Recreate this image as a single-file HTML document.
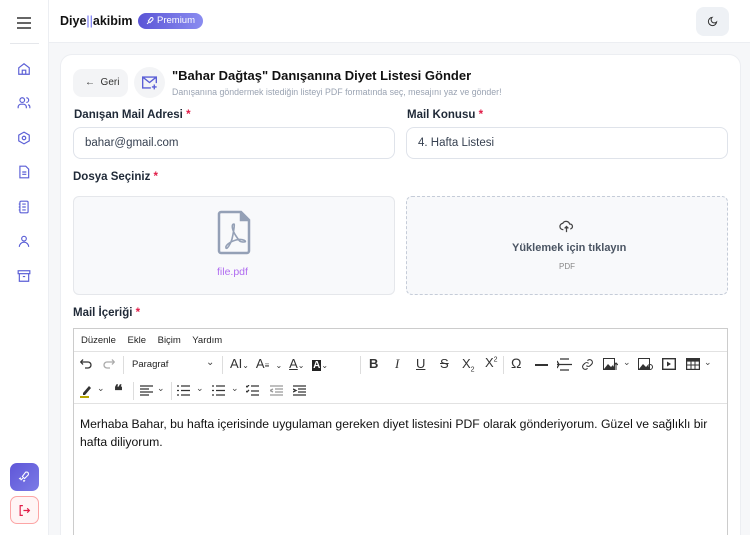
<!DOCTYPE html>
<html><head><meta charset="utf-8"><style>
*{box-sizing:border-box;margin:0;padding:0}
html,body{width:750px;height:535px;overflow:hidden}
body{background:#f6f7f9;font-family:"Liberation Sans",sans-serif;position:relative;color:#1f2937}
.side{position:absolute;left:0;top:0;width:49px;height:535px;background:#fff;border-right:1px solid #eceef2}
.hdr{position:absolute;left:49px;top:0;right:0;height:43px;background:#fff;border-bottom:1px solid #eceef2}
.ic{position:absolute;left:17px}
.card{position:absolute;left:60px;top:54px;width:681px;height:481px;background:#fff;border:1px solid #eceef2;border-bottom:none;border-radius:12px 12px 0 0}
.abs{position:absolute}
.lbl{position:absolute;font-size:11.5px;font-weight:bold;color:#1f2937}
.lbl b{color:#e11d48}
.inp{position:absolute;height:32px;border:1px solid #dfe3ea;border-radius:8px;font-size:11.5px;color:#374151;padding:9px 0 0 11px;background:#fff}
.tb{position:absolute;font-size:13px;color:#333}
</style></head><body>
<div class="side">
 <svg class="abs" style="left:17px;top:17px" width="14" height="12" viewBox="0 0 14 12"><path d="M0 1h14M0 6h14M0 11h14" stroke="#333" stroke-width="1.6"/></svg>
 <div class="abs" style="left:10px;top:43px;width:29px;height:1px;background:#e5e7eb"></div>
 <svg class="ic" style="top:62px" width="14" height="14" viewBox="0 0 24 24" fill="none" stroke="#5b5fd6" stroke-width="2"><path d="M3 10l9-7 9 7v11H3z M9 21v-7h6v7"/></svg>
 <svg class="ic" style="top:96px" width="14" height="14" viewBox="0 0 24 24" fill="none" stroke="#5b5fd6" stroke-width="2"><circle cx="9" cy="7" r="4"/><path d="M2 21v-2a5 5 0 015-5h4a5 5 0 015 5v2M16 3a4 4 0 010 8M22 21v-2a4 4 0 00-3-4"/></svg>
 <svg class="ic" style="top:131px" width="14" height="14" viewBox="0 0 24 24" fill="none" stroke="#5b5fd6" stroke-width="2"><path d="M12 2l9 5v10l-9 5-9-5V7z"/><circle cx="12" cy="12" r="3"/></svg>
 <svg class="ic" style="top:165px" width="14" height="14" viewBox="0 0 24 24" fill="none" stroke="#5b5fd6" stroke-width="2"><path d="M5 2h10l5 5v15H5z M9 12h7M9 16h7"/></svg>
 <svg class="ic" style="top:200px" width="14" height="14" viewBox="0 0 24 24" fill="none" stroke="#5b5fd6" stroke-width="2"><rect x="5" y="2" width="14" height="20" rx="2"/><path d="M9 7h6M9 12h6M9 17h6M3 7h3M3 12h3M3 17h3"/></svg>
 <svg class="ic" style="top:234px" width="14" height="14" viewBox="0 0 24 24" fill="none" stroke="#5b5fd6" stroke-width="2"><circle cx="12" cy="8" r="4"/><path d="M4 22a8 8 0 0116 0"/></svg>
 <svg class="ic" style="top:269px" width="14" height="14" viewBox="0 0 24 24" fill="none" stroke="#5b5fd6" stroke-width="2"><rect x="2" y="3" width="20" height="5"/><path d="M4 8v13h16V8M10 13h4"/></svg>
 <div class="abs" style="left:10px;top:463px;width:29px;height:28px;border-radius:7px;background:linear-gradient(135deg,#5f56d8,#7b7be6)"><svg class="abs" style="left:8px;top:7px" width="13" height="13" viewBox="0 0 24 24" fill="none" stroke="#fff" stroke-width="2"><path d="M5 19l4-4M14 4c4-1 6 1 5 5l-7 7-4-4zM5 14l-2 2 3 1M10 19l1 2 2-2"/></svg></div>
 <div class="abs" style="left:10px;top:496px;width:29px;height:28px;border-radius:7px;border:1px solid #fca5a5;background:#fff5f5"><svg class="abs" style="left:7px;top:7px" width="13" height="13" viewBox="0 0 24 24" fill="none" stroke="#e11d48" stroke-width="2.2"><path d="M9 3H4v18h5M10 12h11M17 8l4 4-4 4"/></svg></div>
</div>
<div class="hdr">
 <div class="abs" style="left:11px;top:14px;font-size:12.5px;font-weight:bold;color:#111">Diye<span style="color:#6366f1;font-weight:normal">||</span>akibim</div>
 <div class="abs" style="left:89px;top:13px;width:65px;height:16px;border-radius:8px;background:linear-gradient(90deg,#5b55d6,#8a8cf0);color:#fff;font-size:9.5px;padding:2px 0 0 19px">Premium</div>
 <svg class="abs" style="left:96px;top:16px" width="10" height="10" viewBox="0 0 24 24" fill="none" stroke="#fff" stroke-width="2.5"><path d="M5 19l4-4M14 4c4-1 6 1 5 5l-7 7-4-4z"/></svg>
 <div class="abs" style="left:647px;top:7px;width:33px;height:29px;border-radius:8px;background:#eef1f5"><svg class="abs" style="left:11px;top:9px" width="11" height="11" viewBox="0 0 24 24" fill="none" stroke="#333" stroke-width="2.2"><path d="M21 13A9 9 0 1111 3a7 7 0 0010 10z"/></svg></div>
</div>
<div class="card"></div>
<div class="abs" style="left:73px;top:69px;width:55px;height:28px;border-radius:9px;background:#f3f4f6;font-size:10px;color:#333;padding:8px 0 0 12px">←&nbsp;&nbsp;Geri</div>
<div class="abs" style="left:134px;top:67px;width:31px;height:31px;border-radius:50%;background:#f3f4f6"><svg class="abs" style="left:7px;top:8px" width="17" height="15" viewBox="0 0 24 22" fill="none" stroke="#5b5fd6" stroke-width="2"><path d="M14 19H2V3h20v9M2 3l10 8 10-8M19 14v7M15.5 17.5h7"/></svg></div>
<div class="abs" style="left:172px;top:68px;font-size:13px;font-weight:bold;color:#111">"Bahar Dağtaş" Danışanına Diyet Listesi Gönder</div>
<div class="abs" style="left:172px;top:87px;font-size:8.8px;color:#9aa3b2">Danışanına göndermek istediğin listeyi PDF formatında seç, mesajını yaz ve gönder!</div>
<div class="lbl" style="left:74px;top:109px">Danışan Mail Adresi <b>*</b></div>
<div class="lbl" style="left:407px;top:109px">Mail Konusu <b>*</b></div>
<div class="inp" style="left:73px;top:127px;width:322px">bahar@gmail.com</div>
<div class="inp" style="left:406px;top:127px;width:322px">4. Hafta Listesi</div>
<div class="lbl" style="left:73px;top:171px">Dosya Seçiniz <b>*</b></div>
<div class="abs" style="left:73px;top:196px;width:322px;height:99px;border:1px solid #e5e7eb;border-radius:6px;background:#f8f9fb"></div>
<svg class="abs" style="left:217px;top:210px" width="34" height="45" viewBox="0 0 34 45" fill="none" stroke="#94a0b6" stroke-width="2.5"><path d="M4 2h20l8 8v31a2 2 0 01-2 2H4a2 2 0 01-2-2V4a2 2 0 012-2z"/><path d="M24 2v8h8" fill="#94a0b6"/><path d="M17 14c-3 0-2 6 2 12s4 6 8 6-1-4-8-2-11 6-10 8 5-5 6-9 3-15 2-15z" stroke-width="1.6"/></svg>
<div class="abs" style="left:217px;top:266px;font-size:10.5px;color:#b06cf0">file.pdf</div>
<div class="abs" style="left:406px;top:196px;width:322px;height:99px;border:1px dashed #c5ccd8;border-radius:6px;background:#f8f9fb"></div>
<svg class="abs" style="left:559px;top:219px" width="15" height="15" viewBox="0 0 24 24" fill="none" stroke="#444" stroke-width="2"><path d="M7 17a5 5 0 01-1-10 6 6 0 0111 1 4 4 0 011 8M12 21v-9M9 15l3-3 3 3"/></svg>
<div class="abs" style="left:512px;top:242px;font-size:11px;font-weight:bold;color:#4b5563">Yüklemek için tıklayın</div>
<div class="abs" style="left:559px;top:262px;font-size:8px;color:#888">PDF</div>
<div class="lbl" style="left:73px;top:307px">Mail İçeriği <b>*</b></div>
<div class="abs" style="left:73px;top:328px;width:655px;height:220px;border:1px solid #ccc;background:#fff"></div>
<div class="abs" style="left:74px;top:351px;width:653px;height:1px;background:#e2e2e2"></div>
<div class="abs" style="left:74px;top:403px;width:653px;height:1px;background:#e2e2e2"></div>
<div class="abs" style="left:81px;top:335px;font-size:9.5px;color:#222;word-spacing:9px">Düzenle Ekle Biçim Yardım</div>
<svg class="abs" style="left:80px;top:359px" width="12" height="10" viewBox="0 0 12 10" fill="none" stroke="#333" stroke-width="1.3"><path d="M1 3h7a3 3 0 010 6H5M3 0.5L0.8 3 3 5.5"/></svg>
<svg class="abs" style="left:103px;top:359px" width="12" height="10" viewBox="0 0 12 10" fill="none" stroke="#aaa" stroke-width="1.3"><path d="M11 3H4a3 3 0 000 6h3M9 0.5L11.2 3 9 5.5"/></svg>
<div class="abs" style="left:123px;top:356px;width:1px;height:18px;background:#ddd"></div>
<div class="abs" style="left:132px;top:359px;font-size:9.5px;color:#222">Paragraf</div>
<div class="abs" style="left:206px;top:357px;font-size:10px;color:#444">⌄</div>
<div class="abs" style="left:222px;top:356px;width:1px;height:18px;background:#ddd"></div>
<div class="tb" style="left:230px;top:356px;word-spacing:4px">AI<small style="font-size:8px">⌄</small> A<small style="font-size:8px">≡ ⌄</small> <u>A</u><small style="font-size:8px">⌄</small> <span style="background:#222;color:#fff;font-size:10px;padding:0 1px;font-weight:bold">A</span><small style="font-size:8px">⌄</small></div>
<div class="abs" style="left:360px;top:356px;width:1px;height:18px;background:#ddd"></div>
<div class="tb" style="left:369px;top:356px;font-weight:bold">B</div>
<div class="tb" style="left:395px;top:356px;font-family:'Liberation Serif';font-style:italic">I</div>
<div class="tb" style="left:416px;top:356px;text-decoration:underline">U</div>
<div class="tb" style="left:440px;top:356px;text-decoration:line-through">S</div>
<div class="tb" style="left:462px;top:356px">X<sub style="font-size:7px">2</sub></div>
<div class="tb" style="left:485px;top:355px">X<sup style="font-size:7px">2</sup></div>
<div class="abs" style="left:503px;top:356px;width:1px;height:18px;background:#ddd"></div>
<div class="tb" style="left:511px;top:355px;font-size:14px">Ω</div>
<div class="abs" style="left:535px;top:364px;width:13px;height:2px;background:#333"></div>
<svg class="abs" style="left:557px;top:358px" width="15" height="13" viewBox="0 0 15 13" fill="none" stroke="#333" stroke-width="1.3"><path d="M0 6.5h15M3 1h9M3 12h9M0 3l2 3.5-2 3.5"/></svg>
<svg class="abs" style="left:581px;top:358px" width="13" height="13" viewBox="0 0 24 24" fill="none" stroke="#333" stroke-width="2"><path d="M10 14a5 5 0 007 0l3-3a5 5 0 00-7-7l-1 1M14 10a5 5 0 00-7 0l-3 3a5 5 0 007 7l1-1"/></svg>
<svg class="abs" style="left:603px;top:358px" width="15" height="13" viewBox="0 0 15 13"><rect x="0.5" y="0.5" width="11" height="11" fill="none" stroke="#333"/><path d="M1 11l4-5 3 3 2-2 2 4z" fill="#333"/><path d="M13 12V5M11 7l2-2 2 2" stroke="#333" fill="none"/></svg>
<div class="abs" style="left:623px;top:357px;font-size:9px;color:#444">⌄</div>
<svg class="abs" style="left:638px;top:358px" width="15" height="13" viewBox="0 0 15 13"><rect x="0.5" y="0.5" width="11" height="11" fill="none" stroke="#333"/><path d="M1 11l4-5 3 3 2-2 2 4z" fill="#333"/><circle cx="12" cy="9" r="2.5" fill="none" stroke="#333"/></svg>
<svg class="abs" style="left:662px;top:358px" width="14" height="12" viewBox="0 0 14 12"><rect x="0.7" y="0.7" width="12.6" height="10.6" fill="none" stroke="#333" stroke-width="1.4"/><path d="M5 3.5l4 2.5-4 2.5z" fill="#333"/></svg>
<svg class="abs" style="left:686px;top:358px" width="14" height="12" viewBox="0 0 14 12"><rect x="0.6" y="0.6" width="12.8" height="10.8" fill="none" stroke="#333" stroke-width="1.2"/><rect x="0.6" y="0.6" width="12.8" height="3" fill="#333"/><path d="M0 7h14M5 0v12M9 0v12" stroke="#333"/></svg>
<div class="abs" style="left:704px;top:357px;font-size:9px;color:#444">⌄</div>
<svg class="abs" style="left:80px;top:384px" width="14" height="14" viewBox="0 0 14 14"><path d="M3 9l6-7 2 2-6 7H3z" fill="#333"/><rect x="0" y="12" width="9" height="2" fill="#b8a600"/></svg>
<div class="abs" style="left:97px;top:383px;font-size:9px;color:#444">⌄</div>
<div class="tb" style="left:114px;top:381px;font-size:16px;font-weight:bold;letter-spacing:-1px">❝</div>
<div class="abs" style="left:133px;top:382px;width:1px;height:18px;background:#ddd"></div>
<svg class="abs" style="left:140px;top:385px" width="13" height="11" viewBox="0 0 13 11" stroke="#333" stroke-width="1.3"><path d="M0 1h13M0 4h9M0 7h13M0 10h9"/></svg>
<div class="abs" style="left:157px;top:383px;font-size:9px;color:#444">⌄</div>
<div class="abs" style="left:171px;top:382px;width:1px;height:18px;background:#ddd"></div>
<svg class="abs" style="left:177px;top:385px" width="13" height="11" viewBox="0 0 13 11" stroke="#333" stroke-width="1.3"><path d="M0 1h2M4 1h9M0 5.5h2M4 5.5h9M0 10h2M4 10h9"/></svg>
<div class="abs" style="left:196px;top:383px;font-size:9px;color:#444">⌄</div>
<svg class="abs" style="left:212px;top:385px" width="13" height="11" viewBox="0 0 13 11" stroke="#333" stroke-width="1.3"><path d="M0 1h2M4 1h9M0 5.5h2M4 5.5h9M0 10h2M4 10h9"/></svg>
<div class="abs" style="left:231px;top:383px;font-size:9px;color:#444">⌄</div>
<svg class="abs" style="left:246px;top:385px" width="13" height="11" viewBox="0 0 13 11" stroke="#333" stroke-width="1.3" fill="none"><path d="M0 1l1 1 2-2M5 1h8M0 6l1 1 2-2M5 6h8M5 10h8"/></svg>
<svg class="abs" style="left:270px;top:385px" width="13" height="11" viewBox="0 0 13 11" stroke="#999" stroke-width="1.3" fill="none"><path d="M0 1h13M5 4h8M5 7h8M0 10h13M3 4L0 5.5 3 7"/></svg>
<svg class="abs" style="left:293px;top:385px" width="13" height="11" viewBox="0 0 13 11" stroke="#333" stroke-width="1.3" fill="none"><path d="M0 1h13M5 4h8M5 7h8M0 10h13M0 4l3 1.5L0 7"/></svg>
<div class="abs" style="left:80px;top:415px;font-size:12.2px;color:#111;line-height:18px;width:645px">Merhaba Bahar, bu hafta içerisinde uygulaman gereken diyet listesini PDF olarak gönderiyorum. Güzel ve sağlıklı bir hafta diliyorum.</div>
</body></html>
